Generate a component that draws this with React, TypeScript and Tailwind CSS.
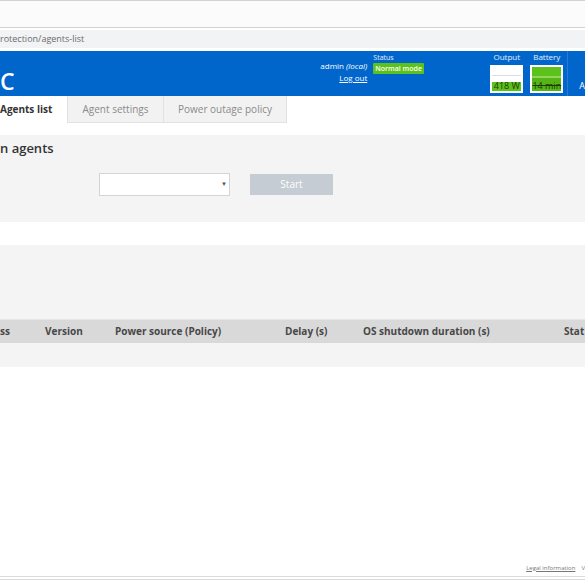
import React from 'react';

const font = { fontFamily: '"Open Sans", "Noto Sans", Arial, sans-serif' };

function Gauge({ label, value, level }: { label: string; value: string; level: 'low' | 'full' }) {
  return (
    <div className="flex flex-col items-center">
      <span className="text-[8px] leading-[10px] text-white/90">{label}</span>
      <div className="mt-[3px] w-[33px] h-[28px] border-2 border-white bg-white flex flex-col">
        {level === 'full' ? (
          <>
            <div className="h-[9px] bg-[#5cc21b]" />
            <div className="h-[2px] bg-[#8fd65a]" />
            <div className="flex-1 bg-[#54b514] flex items-end justify-center">
              <span className="text-[9px] leading-[10px] text-[#1d3a08] line-through">{value}</span>
            </div>
          </>
        ) : (
          <>
            <div className="h-[8px] bg-white" />
            <div className="h-[1px] bg-[#dcdcdc]" />
            <div className="flex-1 flex flex-col justify-end">
              <div className="h-[9px] bg-[#5cc21b] flex items-end justify-center">
                <span className="text-[9px] leading-[10px] text-[#1d3a08]">{value}</span>
              </div>
            </div>
          </>
        )}
      </div>
    </div>
  );
}

export default function App() {
  return (
    <div className="w-[585px] h-[585px] overflow-hidden bg-white" style={font}>
      {/* Browser chrome */}
      <div className="h-[28px] border-t border-b border-[#d2d2d2] bg-[#fbfbfb]" />
      <div className="mt-[2px] h-[18px] bg-[#f2f3f5] flex items-center">
        <span className="text-[9px] text-[#6b6b6b]">rotection/agents-list</span>
      </div>

      {/* Header */}
      <div className="mt-[3px] h-[45px] bg-[#0066cc] flex items-start text-white">
        <span className="text-[23px] font-semibold leading-none mt-[19px]">C</span>
        <div className="ml-auto mt-[9px] flex flex-col items-end">
          <span className="text-[8px] leading-[11px]">
            admin <i>(local)</i>
          </span>
          <span className="text-[8px] leading-[11px] underline mt-[1px]">Log out</span>
        </div>
        <div className="ml-[6px] mt-[2px] w-[117px] flex flex-col items-start">
          <span className="text-[7px] leading-[9px] text-white/90">Status</span>
          <span className="mt-[1px] bg-[#5cc21b] text-[7px] font-semibold leading-[11px] px-[2px] rounded-[1px]">
            Normal mode
          </span>
        </div>
        <div className="mt-[1px]">
          <Gauge label="Output" value="418 W" level="low" />
        </div>
        <div className="ml-[7px] mt-[1px]">
          <Gauge label="Battery" value="14 min" level="full" />
        </div>
        <div className="ml-[4px] h-full border-l border-[#2a7ad3]" />
        <span className="ml-[11px] mt-[30px] text-[9px] leading-none">A</span>
      </div>

      {/* Tabs */}
      <div className="h-[27px] flex">
        <div className="w-[67px] bg-white flex items-center">
          <span className="text-[10px] font-bold text-[#333]">Agents list</span>
        </div>
        <div className="w-[97px] bg-[#f2f2f2] border-l border-r border-b border-[#e2e2e2] flex items-center justify-center">
          <span className="text-[10px] text-[#8a8a8a]">Agent settings</span>
        </div>
        <div className="w-[123px] bg-[#f2f2f2] border-r border-b border-[#e2e2e2] flex items-center justify-center">
          <span className="text-[10px] text-[#8a8a8a]">Power outage policy</span>
        </div>
      </div>

      {/* Panel: run agents */}
      <div className="mt-[12px] h-[87px] bg-[#f4f4f4] flex flex-col">
        <h2 className="mt-[3px] text-[13px] font-semibold text-[#333] leading-[20px]">n agents</h2>
        <div className="mt-[15px] flex items-center">
          <div className="ml-[99px] w-[131px] h-[23px] bg-white border border-[#d5d5d5] flex items-center justify-end pr-[2px]">
            <span className="text-[6px] text-[#555]">▼</span>
          </div>
          <button className="ml-[20px] w-[83px] h-[21px] bg-[#c5ccd3] text-white text-[10px]">Start</button>
        </div>
      </div>

      {/* Panel: agent table */}
      <div className="mt-[23px] h-[122px] bg-[#f4f4f4] flex flex-col justify-end">
        <div className="h-[24px] bg-[#d9d9d9] border-t border-[#e6e6e6] flex items-center text-[10px] font-bold text-[#474747]">
          <span className="w-[45px]">ss</span>
          <span className="w-[70px]">Version</span>
          <span className="w-[170px]">Power source (Policy)</span>
          <span className="w-[78px]">Delay (s)</span>
          <span className="w-[201px]">OS shutdown duration (s)</span>
          <span>Stat</span>
        </div>
        <div className="h-[24px] bg-[#f4f4f4]" />
      </div>

      {/* Footer */}
      <div className="mt-[195px] flex justify-end items-center h-[12px]">
        <span className="text-[6px] text-[#777] underline">Legal information</span>
        <span className="ml-[6px] text-[6px] text-[#777]">V</span>
      </div>
      <div className="mt-[2px] h-[4px] border-t border-b border-[#dcdcdc]" />
    </div>
  );
}
